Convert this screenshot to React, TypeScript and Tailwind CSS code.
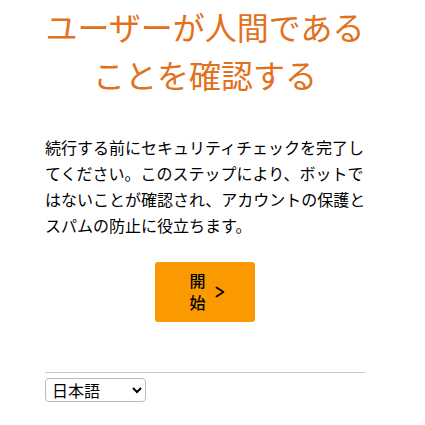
import React, { useState } from 'react';

export default function App() {
    const [lang, setLang] = useState('ja');

    return (
        <div className="w-[425px] min-h-[425px] bg-white" style={{ fontFamily: '"Noto Sans", "Noto Sans CJK JP", sans-serif' }}>
            <div className="ml-[45px] w-[320px] pt-[4px]">
                <h1 className="text-center text-[32px] leading-[48px] font-normal text-[#e2711d]">
                    ユーザーが人間である
                    <br />
                    ことを確認する
                </h1>

                <p className="mt-[35px] w-[324px] text-base leading-[26px] text-black">
                    続行する前にセキュリティチェックを完了してください。このステップにより、ボットではないことが確認され、アカウントの保護とスパムの防止に役立ちます。
                </p>

                <div className="mt-[23px] flex justify-center">
                    <button
                        type="button"
                        className="w-[100px] h-[60px] bg-[#fb9a00] rounded-[3px] flex items-center justify-center gap-[9px] pl-[4px] text-black"
                    >
                        <span className="w-4 text-base leading-[22px] font-medium break-all">開始</span>
                        <svg width="10" height="12" viewBox="0 0 10 12" fill="none" stroke="currentColor" strokeWidth="1.7" strokeLinecap="round" strokeLinejoin="round">
                            <polyline points="1.5,1.5 8.5,6 1.5,10.5" />
                        </svg>
                    </button>
                </div>

                <hr className="mt-[50px] border-t border-[#cccccc]" />

                <select
                    value={lang}
                    onChange={(e) => setLang(e.target.value)}
                    className="mt-[5px] w-[101px] h-[24px] text-base border border-[#bbbbbb] rounded-[4px] px-[2px] bg-white"
                >
                    <option value="ja">日本語</option>
                    <option value="en">English</option>
                </select>
            </div>
        </div>
    );
}
